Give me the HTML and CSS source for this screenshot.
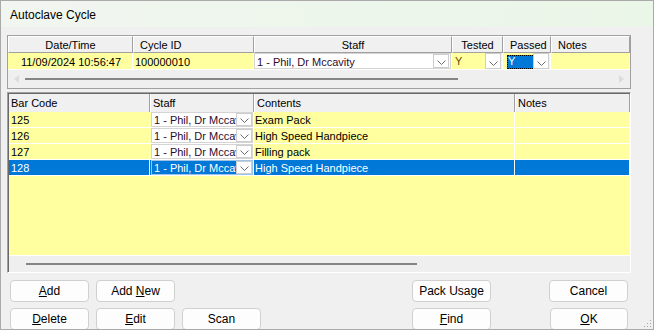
FILE: index.html
```html
<!DOCTYPE html>
<html lang="en">
<head>
    <meta charset="UTF-8">
    <title>Autoclave Cycle</title>
    <link rel="stylesheet" href="styles.css">
</head>
<body>
    <div class="window">
        <div class="titlebar">Autoclave Cycle</div>
        <div class="content">
            <!-- cycle grid -->
            <div class="grid cycle-grid">
                <div class="cycle-cols">
                    <div class="gh center">Date/Time</div>
                    <div class="gh">Cycle ID</div>
                    <div class="gh center">Staff</div>
                    <div class="gh center">Tested</div>
                    <div class="gh center">Passed</div>
                    <div class="gh">Notes</div>
                </div>
                <div class="cycle-cols row17">
                    <div class="gc center">11/09/2024 10:56:47</div>
                    <div class="gc">100000010</div>
                    <div class="gc white">
                        <div class="combo boxed">
                            <span class="val staff">1 - Phil, Dr Mccavity</span>
                            <span class="drop"><svg width="9" height="5" viewBox="0 0 9 5"><polyline points="0.5,0.5 4.5,4.5 8.5,0.5" fill="none" stroke="#6d6d6d"/></svg></span>
                        </div>
                    </div>
                    <div class="gc">
                        <div class="combo">
                            <span class="val yes">Y</span>
                            <span class="drop"><svg width="9" height="5" viewBox="0 0 9 5"><polyline points="0.5,0.5 4.5,4.5 8.5,0.5" fill="none" stroke="#6d6d6d"/></svg></span>
                        </div>
                    </div>
                    <div class="gc">
                        <div class="combo">
                            <span class="val"><span class="focus">Y</span></span>
                            <span class="drop"><svg width="9" height="5" viewBox="0 0 9 5"><polyline points="0.5,0.5 4.5,4.5 8.5,0.5" fill="none" stroke="#6d6d6d"/></svg></span>
                        </div>
                    </div>
                    <div class="gc"></div>
                </div>
                <div class="hscroll tall">
                    <span class="arrow"><svg width="5" height="8" viewBox="0 0 5 8"><polygon points="5,0 0,4 5,8" fill="#dcdcdc"/></svg></span>
                    <div class="track"><div class="thumb" style="width:433px"></div></div>
                    <span class="arrow"><svg width="5" height="8" viewBox="0 0 5 8"><polygon points="0,0 5,4 0,8" fill="#dcdcdc"/></svg></span>
                </div>
            </div>

            <!-- pack grid -->
            <div class="grid pack-grid">
                <div class="pack-inner">
                    <div class="pack-cols head">
                        <div class="ph">Bar Code</div>
                        <div class="ph">Staff</div>
                        <div class="ph">Contents</div>
                        <div class="ph">Notes</div>
                    </div>
                    <div class="pack-cols row16">
                        <div class="gc">125</div>
                        <div class="gc"><div class="combo boxed row-combo"><span class="val staff">1 - Phil, Dr Mccavity</span><span class="drop"><svg width="9" height="5" viewBox="0 0 9 5"><polyline points="0.5,0.5 4.5,4.5 8.5,0.5" fill="none" stroke="#6d6d6d"/></svg></span></div></div>
                        <div class="gc">Exam Pack</div>
                        <div class="gc"></div>
                    </div>
                    <div class="pack-cols row16">
                        <div class="gc">126</div>
                        <div class="gc"><div class="combo boxed row-combo"><span class="val staff">1 - Phil, Dr Mccavity</span><span class="drop"><svg width="9" height="5" viewBox="0 0 9 5"><polyline points="0.5,0.5 4.5,4.5 8.5,0.5" fill="none" stroke="#6d6d6d"/></svg></span></div></div>
                        <div class="gc">High Speed Handpiece</div>
                        <div class="gc"></div>
                    </div>
                    <div class="pack-cols row16">
                        <div class="gc">127</div>
                        <div class="gc"><div class="combo boxed row-combo"><span class="val staff">1 - Phil, Dr Mccavity</span><span class="drop"><svg width="9" height="5" viewBox="0 0 9 5"><polyline points="0.5,0.5 4.5,4.5 8.5,0.5" fill="none" stroke="#6d6d6d"/></svg></span></div></div>
                        <div class="gc">Filling pack</div>
                        <div class="gc"></div>
                    </div>
                    <div class="pack-cols row16 selected">
                        <div class="gc">128</div>
                        <div class="gc"><div class="combo boxed row-combo"><span class="val">1 - Phil, Dr Mccavity</span><span class="drop"><svg width="9" height="5" viewBox="0 0 9 5"><polyline points="0.5,0.5 4.5,4.5 8.5,0.5" fill="none" stroke="#6d6d6d"/></svg></span></div></div>
                        <div class="gc">High Speed Handpiece</div>
                        <div class="gc"></div>
                    </div>
                    <div class="filler"></div>
                    <div class="hscroll">
                        <span class="arrow"></span>
                        <div class="track"><div class="thumb" style="width:391px"></div></div>
                        <span class="arrow"></span>
                    </div>
                </div>
            </div>

            <div class="buttons">
                <button class="b-add"><u>A</u>dd</button>
                <button class="b-addnew">Add <u>N</u>ew</button>
                <button class="b-pack">Pack Usage</button>
                <button class="b-cancel">Cancel</button>
                <button class="b-delete"><u>D</u>elete</button>
                <button class="b-edit"><u>E</u>dit</button>
                <button class="b-scan">Scan</button>
                <button class="b-find"><u>F</u>ind</button>
                <button class="b-ok"><u>O</u>K</button>
            </div>
        </div>
        <svg class="grip" width="8" height="8" viewBox="0 0 8 8">
            <rect x="6" y="0" width="1" height="1" fill="#a8a8a8"/>
            <rect x="3" y="3" width="1" height="1" fill="#a8a8a8"/>
            <rect x="6" y="3" width="1" height="1" fill="#a8a8a8"/>
            <rect x="0" y="6" width="1" height="1" fill="#a8a8a8"/>
            <rect x="3" y="6" width="1" height="1" fill="#a8a8a8"/>
            <rect x="6" y="6" width="1" height="1" fill="#a8a8a8"/>
        </svg>
    </div>
</body>
</html>
```

FILE: styles.css
```css
:root {
    --grid-yellow: #ffffa0;
    --select-blue: #0078d7;
    --face: #f0f0f0;
    --edge: #a0a0a0;
    --edge-dark: #696969;
}

* { box-sizing: border-box; }

body {
    margin: 0;
    font-family: 'Liberation Sans', Arial, sans-serif;
    background: var(--face);
}

.window {
    position: relative;
    width: 654px;
    height: 330px;
    border: 1px solid #aaa;
    background: var(--face);
    overflow: hidden;
    display: flex;
    flex-direction: column;
}

.titlebar {
    flex: none;
    height: 26px;
    padding: 1px 0 0 9px;
    display: flex;
    align-items: center;
    font-size: 12px;
    color: #000;
    background: linear-gradient(90deg, #f1f6f0, #eaf6e8);
}

.content {
    padding: 8px 0 0 6px;
    display: flex;
    flex-direction: column;
}

/* grids */
.grid {
    width: 624px;
    font-size: 11px;
    color: #000;
    background: var(--face);
}
.cycle-grid {
    border: 1px solid var(--edge);
    display: flex;
    flex-direction: column;
}
.cycle-cols {
    display: grid;
    grid-template-columns: 125px 121px 198px 51px 48px 1fr;
}
.gh {
    height: 17px;
    line-height: 16px;
    padding: 0 6px;
    white-space: nowrap;
    overflow: hidden;
    background: var(--face);
    border-top: 1px solid #fff;
    border-left: 1px solid #fff;
    border-right: 1px solid var(--edge);
    border-bottom: 1px solid var(--edge);
}
.center { text-align: center; }

.gc {
    background: var(--grid-yellow);
    border-right: 1px solid #fff;
    border-bottom: 1px solid #fff;
    padding-left: 2px;
    white-space: nowrap;
    overflow: hidden;
}
.row17 { height: 17px; }
.row17 .gc { line-height: 18px; }
.gc.white { background: #fff; padding: 0; }

.combo {
    height: 100%;
    display: flex;
    align-items: stretch;
}
.combo.boxed { border: 1px solid #d4d4d4; background: #fff; }
.combo .val {
    flex: 1;
    overflow: hidden;
    white-space: nowrap;
    padding-left: 2px;
}
.row17 .combo .val { line-height: 16px; }
.combo .staff { color: #2e0b2e; }
.combo .yes { color: #6e4c00; padding-left: 1px; }
.drop {
    flex: none;
    width: 16px;
    margin-right: 1px;
    background: #fff;
    border: 1px solid #cdcdcd;
    display: flex;
    align-items: flex-end;
    justify-content: center;
    padding-bottom: 2px;
}
.drop svg { display: block; }
.focus {
    display: inline-block;
    width: 28px;
    height: 14px;
    line-height: 13px;
    margin-top: 1px;
    padding-left: 1px;
    color: #fff;
    background: var(--select-blue);
    outline: 1px dotted #000;
    outline-offset: -1px;
}

.hscroll {
    height: 16px;
    display: flex;
    align-items: center;
    background: #efefef;
}
.hscroll.tall { height: 18px; }
.hscroll .arrow {
    width: 17px;
    display: flex;
    justify-content: center;
}
.hscroll .track { flex: 1; }
.thumb {
    height: 2px;
    background: #858585;
}

/* pack grid */
.pack-grid {
    height: 181px;
    margin-top: 3px;
    border-top: 1px solid var(--edge);
    border-left: 1px solid var(--edge);
    border-right: 1px solid #fff;
    border-bottom: 1px solid #fff;
}
.pack-inner {
    height: 100%;
    border-top: 1px solid var(--edge-dark);
    border-left: 1px solid var(--edge-dark);
    display: flex;
    flex-direction: column;
}
.pack-cols {
    display: grid;
    grid-template-columns: 141px 104px 261px 1fr;
}
.head {
    height: 18px;
    border-bottom: 1px solid var(--edge);
}
.ph {
    line-height: 18px;
    padding-left: 3px;
    background: var(--face);
    border-right: 1px solid var(--edge);
    box-shadow: inset 1px 0 0 #fff;
}
.ph:first-child { padding-left: 2px; box-shadow: none; }
.row16 { height: 16px; }
.row16 .gc { line-height: 17px; }
.row16 .gc:nth-child(2) { padding: 0 0 0 1px; }
.row16 .gc:nth-child(3) { padding-left: 1px; }
.row-combo .val { padding-left: 2px; line-height: 15px; }
.row-combo .drop { margin-right: 0; }

.selected .gc { background: var(--select-blue); color: #fff; }
.selected .combo.boxed { background: var(--select-blue); border-color: #9cc3e8; }

.filler {
    flex: 1;
    background: var(--grid-yellow);
    border-bottom: 1px solid #fff;
}

/* buttons */
.buttons {
    margin: 7px 0 0 3px;
    display: grid;
    grid-template-columns: 79px 79px 79px 137px 79px 44px 79px;
    grid-template-rows: 22px 22px;
    column-gap: 7px;
    row-gap: 6px;
}
.buttons button {
    font-family: 'Liberation Sans', Arial, sans-serif;
    font-size: 12px;
    color: #000;
    background: #fdfdfd;
    border: 1px solid #d0d0d0;
    border-radius: 4px;
    padding: 0;
}
.b-add { grid-area: 1 / 1; }
.b-addnew { grid-area: 1 / 2; }
.b-pack { grid-area: 1 / 5; }
.b-cancel { grid-area: 1 / 7; }
.b-delete { grid-area: 2 / 1; }
.b-edit { grid-area: 2 / 2; }
.b-scan { grid-area: 2 / 3; }
.b-find { grid-area: 2 / 5; }
.b-ok { grid-area: 2 / 7; margin-left: 1px; }

.grip {
    position: absolute;
    right: 1px;
    bottom: 1px;
}
```
